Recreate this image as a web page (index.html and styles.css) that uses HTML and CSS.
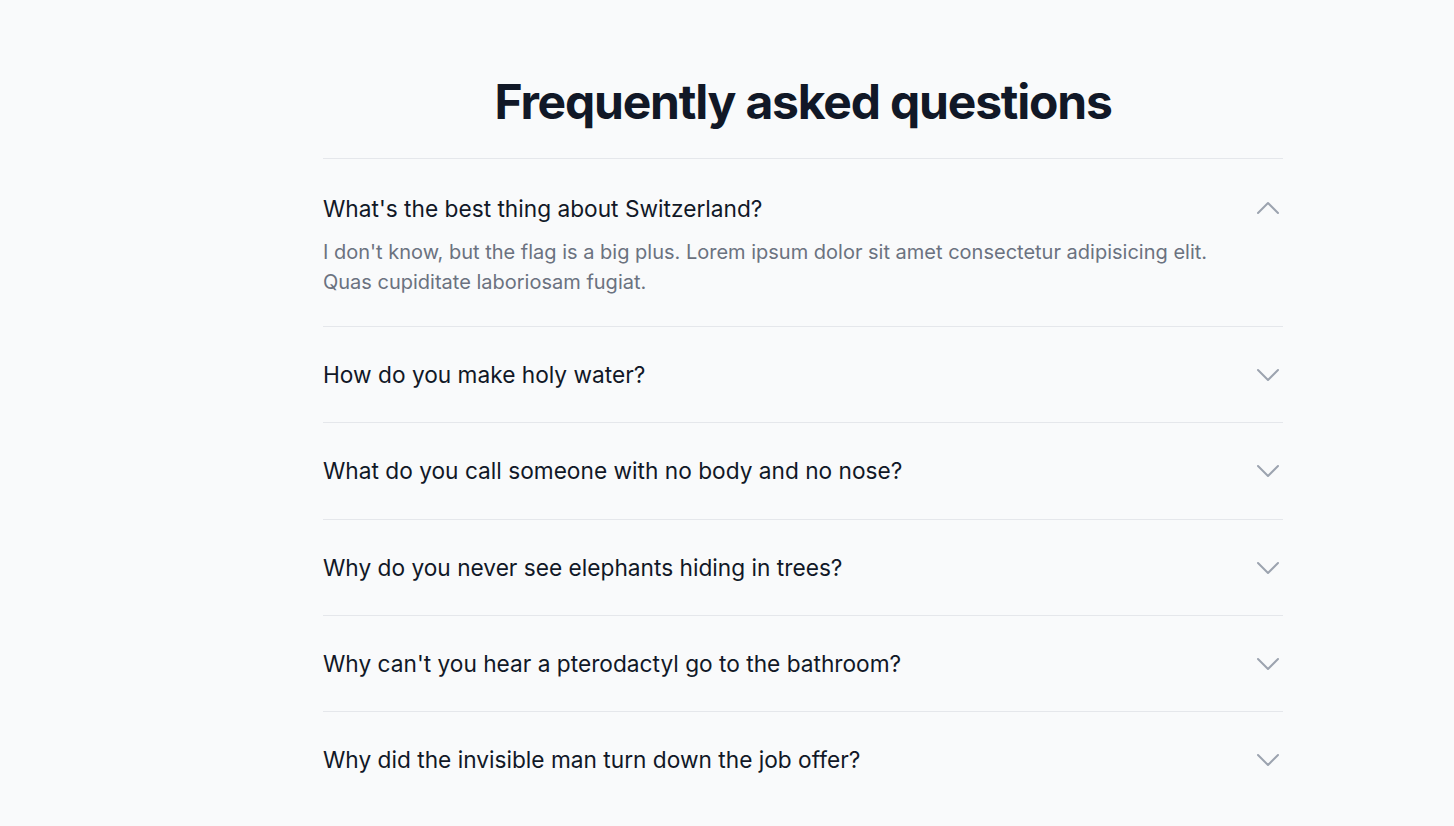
FILE: index.html
```html
<!DOCTYPE html>
<html lang="en">
<head>
<meta charset="utf-8">
<title>FAQ</title>
<link rel="stylesheet" href="styles.css">
</head>
<body>
<main class="faq">
  <h2 class="faq-title">Frequently asked questions</h2>
  <dl class="faq-list">
    <div class="faq-item open">
      <dt class="faq-q">
        <span>What's the best thing about Switzerland?</span>
        <svg class="chev" viewBox="0 0 24 24" fill="none" stroke="currentColor" stroke-width="1.5"><path stroke-linecap="round" stroke-linejoin="round" d="M4.5 15.75l7.5-7.5 7.5 7.5"/></svg>
      </dt>
      <dd class="faq-a">I don't know, but the flag is a big plus. Lorem ipsum dolor sit amet consectetur adipisicing elit. Quas cupiditate laboriosam fugiat.</dd>
    </div>
    <div class="faq-item">
      <dt class="faq-q">
        <span>How do you make holy water?</span>
        <svg class="chev" viewBox="0 0 24 24" fill="none" stroke="currentColor" stroke-width="1.5"><path stroke-linecap="round" stroke-linejoin="round" d="M19.5 8.25l-7.5 7.5-7.5-7.5"/></svg>
      </dt>
    </div>
    <div class="faq-item">
      <dt class="faq-q">
        <span>What do you call someone with no body and no nose?</span>
        <svg class="chev" viewBox="0 0 24 24" fill="none" stroke="currentColor" stroke-width="1.5"><path stroke-linecap="round" stroke-linejoin="round" d="M19.5 8.25l-7.5 7.5-7.5-7.5"/></svg>
      </dt>
    </div>
    <div class="faq-item">
      <dt class="faq-q">
        <span>Why do you never see elephants hiding in trees?</span>
        <svg class="chev" viewBox="0 0 24 24" fill="none" stroke="currentColor" stroke-width="1.5"><path stroke-linecap="round" stroke-linejoin="round" d="M19.5 8.25l-7.5 7.5-7.5-7.5"/></svg>
      </dt>
    </div>
    <div class="faq-item">
      <dt class="faq-q">
        <span>Why can't you hear a pterodactyl go to the bathroom?</span>
        <svg class="chev" viewBox="0 0 24 24" fill="none" stroke="currentColor" stroke-width="1.5"><path stroke-linecap="round" stroke-linejoin="round" d="M19.5 8.25l-7.5 7.5-7.5-7.5"/></svg>
      </dt>
    </div>
    <div class="faq-item">
      <dt class="faq-q">
        <span>Why did the invisible man turn down the job offer?</span>
        <svg class="chev" viewBox="0 0 24 24" fill="none" stroke="currentColor" stroke-width="1.5"><path stroke-linecap="round" stroke-linejoin="round" d="M19.5 8.25l-7.5 7.5-7.5-7.5"/></svg>
      </dt>
    </div>
  </dl>
</main>
</body>
</html>
```
FILE: styles.css
```css
* { box-sizing: border-box; }
html, body { margin: 0; padding: 0; }
body {
  background: #f9fafb;
  font-family: Inter, "Noto Sans", sans-serif;
  color: #111827;
  height: 826px;
  overflow: hidden;
}
.faq {
  width: 960px;
  margin: 0 0 0 323px;
  padding-top: 78px;
}
.faq-title {
  margin: 0 0 32px;
  text-align: center;
  font-size: 48px;
  line-height: 48px;
  font-weight: 700;
  letter-spacing: -0.025em;
  color: #111827;
}
.faq-list {
  margin: 0;
  border-top: 1px solid #e5e7eb;
}
.faq-item {
  padding: 32px 0 31.3px;
  border-top: 1px solid #e5e7eb;
}
.faq-item:first-child { border-top: 0; }
.faq-item.open { padding: 34px 0 29px; }
.faq-q {
  display: flex;
  justify-content: space-between;
  align-items: center;
  font-size: 22.7px;
  line-height: 32px;
  color: #111827;
}
.chev {
  width: 32px;
  height: 32px;
  color: #9ca3af;
  flex: none;
  margin-right: -1px;
}
.open .chev { margin-top: -2px; }
.faq-a {
  margin: 12px 0 0;
  padding-right: 48px;
  font-size: 20px;
  line-height: 30px;
  color: #6b7280;
}
```
